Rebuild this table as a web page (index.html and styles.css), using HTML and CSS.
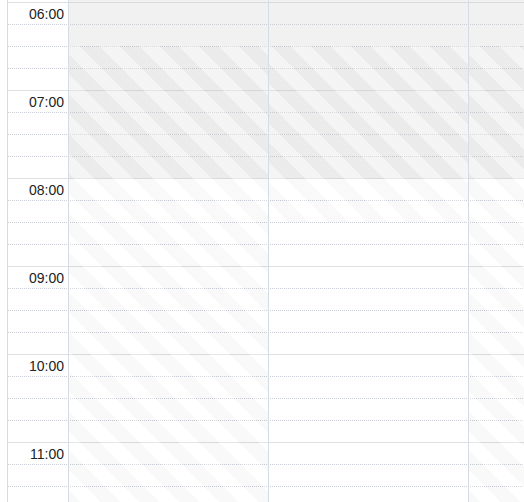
FILE: index.html
```html
<!DOCTYPE html>
<html>
<head>
<meta charset="utf-8">
<link rel="stylesheet" href="styles.css">
</head>
<body>
<div class="cal">
  <div class="slots">
    <div class="slot slot-partial"></div>
    <div class="slot hour"><div class="label">06:00</div></div>
    <div class="slot"></div><div class="slot"></div><div class="slot"></div>
    <div class="slot hour"><div class="label">07:00</div></div>
    <div class="slot"></div><div class="slot"></div><div class="slot"></div>
    <div class="slot hour"><div class="label">08:00</div></div>
    <div class="slot"></div><div class="slot"></div><div class="slot"></div>
    <div class="slot hour"><div class="label">09:00</div></div>
    <div class="slot"></div><div class="slot"></div><div class="slot"></div>
    <div class="slot hour"><div class="label">10:00</div></div>
    <div class="slot"></div><div class="slot"></div><div class="slot"></div>
    <div class="slot hour"><div class="label">11:00</div></div>
    <div class="slot"></div><div class="slot"></div><div class="slot"></div>
  </div>
  <div class="cols">
    <div class="axis"></div>
    <div class="day">
      <div class="nonbiz"></div>
      <div class="stripes to-end"></div>
    </div>
    <div class="day">
      <div class="nonbiz"></div>
      <div class="stripes to-830"></div>
    </div>
    <div class="day">
      <div class="nonbiz"></div>
      <div class="stripes to-end"></div>
    </div>
  </div>
</div>
</body>
</html>
```

FILE: styles.css
```css
html, body {
  margin: 0;
  padding: 0;
  overflow: hidden;
  background: #fff;
}

.cal {
  display: grid;
  margin-left: 7px;
  width: 517px;
  height: 502px;
  overflow: hidden;
  border-left: 1px solid #d5dce4;
  font-family: "Liberation Sans", Arial, sans-serif;
}

.slots, .cols {
  grid-area: 1 / 1;
  min-width: 0;
}

.slots {
  display: flex;
  flex-direction: column;
}

.slot {
  height: 22px;
  box-sizing: border-box;
  border-top: 1px dotted #c9ced4;
  flex: none;
}

.slot.hour {
  border-top: 1px solid #dcdfe3;
}

.slot-partial {
  height: 2px;
  border-top: none;
}

.label {
  width: 60px;
  box-sizing: border-box;
  text-align: right;
  padding: 3px 4px 0 0;
  font-size: 14px;
  line-height: 16px;
  color: #222;
}

.cols {
  display: flex;
}

.axis {
  width: 60px;
  flex: none;
  border-right: 1px solid #d5dce4;
}

.day {
  width: 199px;
  flex: none;
  border-right: 1px solid #d5dce4;
  display: grid;
  grid-template-rows: 46px 132px 44px 1fr;
}

.nonbiz {
  grid-column: 1;
  grid-row: 1 / 3;
  background: rgba(208, 208, 208, 0.3);
}

.stripes {
  grid-column: 1;
  background: repeating-linear-gradient(45deg,
    rgba(255, 255, 255, 0.25) 0 14px,
    rgba(0, 0, 0, 0.022) 14px 28px);
}

.stripes.to-end {
  grid-row: 2 / 5;
}

.stripes.to-830 {
  grid-row: 2 / 4;
}
```
